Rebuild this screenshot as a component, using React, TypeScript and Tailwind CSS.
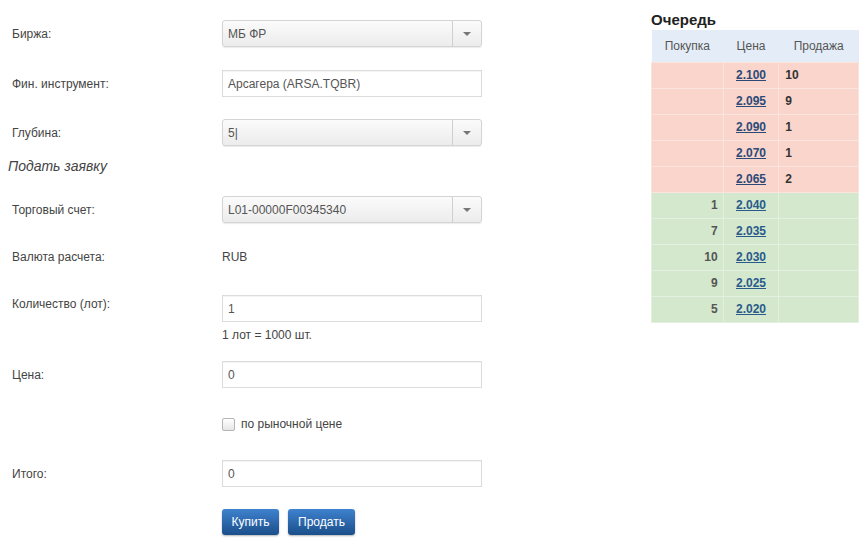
import React, { useState } from 'react';

const asks = [
  { price: '2.100', qty: '10' },
  { price: '2.095', qty: '9' },
  { price: '2.090', qty: '1' },
  { price: '2.070', qty: '1' },
  { price: '2.065', qty: '2' },
];

const bids = [
  { price: '2.040', qty: '1' },
  { price: '2.035', qty: '7' },
  { price: '2.030', qty: '10' },
  { price: '2.025', qty: '9' },
  { price: '2.020', qty: '5' },
];

const SelectBox = ({ value }: { value: string }) => (
  <div className="flex h-[27px] w-[260px] items-stretch rounded-[3px] border border-[#d4d4d4] bg-gradient-to-b from-[#fbfbfb] to-[#ececec] shadow-[0_1px_1px_rgba(0,0,0,0.08)]">
    <div className="flex flex-1 items-center px-[5px] text-[12px] text-[#555]">{value}</div>
    <div className="flex w-[29px] items-center justify-center border-l border-[#cfcfcf]">
      <span className="h-0 w-0 border-x-[4px] border-t-[4px] border-x-transparent border-t-[#777]" />
    </div>
  </div>
);

const TextBox = ({ value }: { value: string }) => (
  <div className="flex h-[27px] w-[260px] items-center border border-[#dcdcdc] bg-white px-[5px] text-[12px] text-[#555] shadow-[inset_0_1px_1px_rgba(0,0,0,0.05)]">
    {value}
  </div>
);

const Row = ({ label, children, className = '' }: { label: string; children: React.ReactNode; className?: string }) => (
  <div className={`flex items-start ${className}`}>
    <div className="w-[222px] pl-[12px] pt-[5px] text-[12px] text-[#444]">{label}</div>
    <div>{children}</div>
  </div>
);

export default function App() {
  const [market, setMarket] = useState(false);

  return (
    <div className="flex h-[546px] w-[864px] bg-white font-['Liberation_Sans',Arial,sans-serif]">
      <div className="w-[640px]">
        <Row label="Биржа:" className="mt-[20px]">
          <SelectBox value="МБ ФР" />
        </Row>
        <Row label="Фин. инструмент:" className="mt-[23px]">
          <TextBox value="Арсагера (ARSA.TQBR)" />
        </Row>
        <Row label="Глубина:" className="mt-[22px]">
          <SelectBox value="5|" />
        </Row>
        <div className="mt-[10px] pl-[8px] text-[14px] italic text-[#444]">Подать заявку</div>
        <Row label="Торговый счет:" className="mt-[19px]">
          <SelectBox value="L01-00000F00345340" />
        </Row>
        <Row label="Валюта расчета:" className="mt-[20px]">
          <div className="flex h-[27px] items-center text-[12px] text-[#444]">RUB</div>
        </Row>
        <div className="mt-[25px] flex items-start">
          <div className="w-[222px] pl-[12px] pt-0 text-[12px] text-[#444]">Количество (лот):</div>
          <div>
            <TextBox value="1" />
            <div className="mt-[4px] text-[12px] text-[#444]">1 лот = 1000 шт.</div>
          </div>
        </div>
        <Row label="Цена:" className="mt-[17px]">
          <TextBox value="0" />
        </Row>
        <div className="mt-[23px] flex h-[26px] items-center pl-[222px]">
          <label className="flex items-center gap-[6px] text-[12px] text-[#444]">
            <input
              type="checkbox"
              checked={market}
              onChange={(e) => setMarket(e.target.checked)}
              className="h-[13px] w-[13px] appearance-none rounded-[2px] border border-[#b5b5b5] bg-gradient-to-b from-[#fff] to-[#e6e6e6] checked:bg-[#3a7bc8]"
            />
            по рыночной цене
          </label>
        </div>
        <Row label="Итого:" className="mt-[23px]">
          <TextBox value="0" />
        </Row>
        <div className="mt-[22px] flex gap-[9px] pl-[222px]">
          <button className="h-[26px] w-[57px] rounded-[3px] bg-gradient-to-b from-[#3f82cf] to-[#1a4f8a] text-[12px] text-white shadow-[0_1px_2px_rgba(0,0,0,0.3)]">
            Купить
          </button>
          <button className="h-[26px] w-[67px] rounded-[3px] bg-gradient-to-b from-[#3f82cf] to-[#1a4f8a] text-[12px] text-white shadow-[0_1px_2px_rgba(0,0,0,0.3)]">
            Продать
          </button>
        </div>
      </div>

      <div className="pl-[11px] pt-[10px]">
        <div className="text-[15px] font-bold leading-[20px] text-[#222]">Очередь</div>
        <table className="w-[208px] border-collapse text-[12px]">
          <thead>
            <tr className="h-[32px] bg-[#e4edf7] text-[#555]">
              <th className="w-[72px] font-normal">Покупка</th>
              <th className="w-[56px] font-normal">Цена</th>
              <th className="w-[80px] font-normal">Продажа</th>
            </tr>
          </thead>
          <tbody>
            {asks.map((r) => (
              <tr key={r.price} className="h-[26px] bg-[#f9d5cc]">
                <td className="border border-[#fbe4de]" />
                <td className="border border-[#fbe4de] text-center">
                  <a href="#" className="font-bold text-[#2c4a78] underline">{r.price}</a>
                </td>
                <td className="border border-[#fbe4de] pl-[6px] font-bold text-[#333]">{r.qty}</td>
              </tr>
            ))}
            {bids.map((r) => (
              <tr key={r.price} className="h-[26px] bg-[#d3e8cd]">
                <td className="border border-[#e3f0df] pr-[5px] text-right font-bold text-[#555]">{r.qty}</td>
                <td className="border border-[#e3f0df] text-center">
                  <a href="#" className="font-bold text-[#2a5a8a] underline">{r.price}</a>
                </td>
                <td className="border border-[#e3f0df]" />
              </tr>
            ))}
          </tbody>
        </table>
      </div>
    </div>
  );
}
